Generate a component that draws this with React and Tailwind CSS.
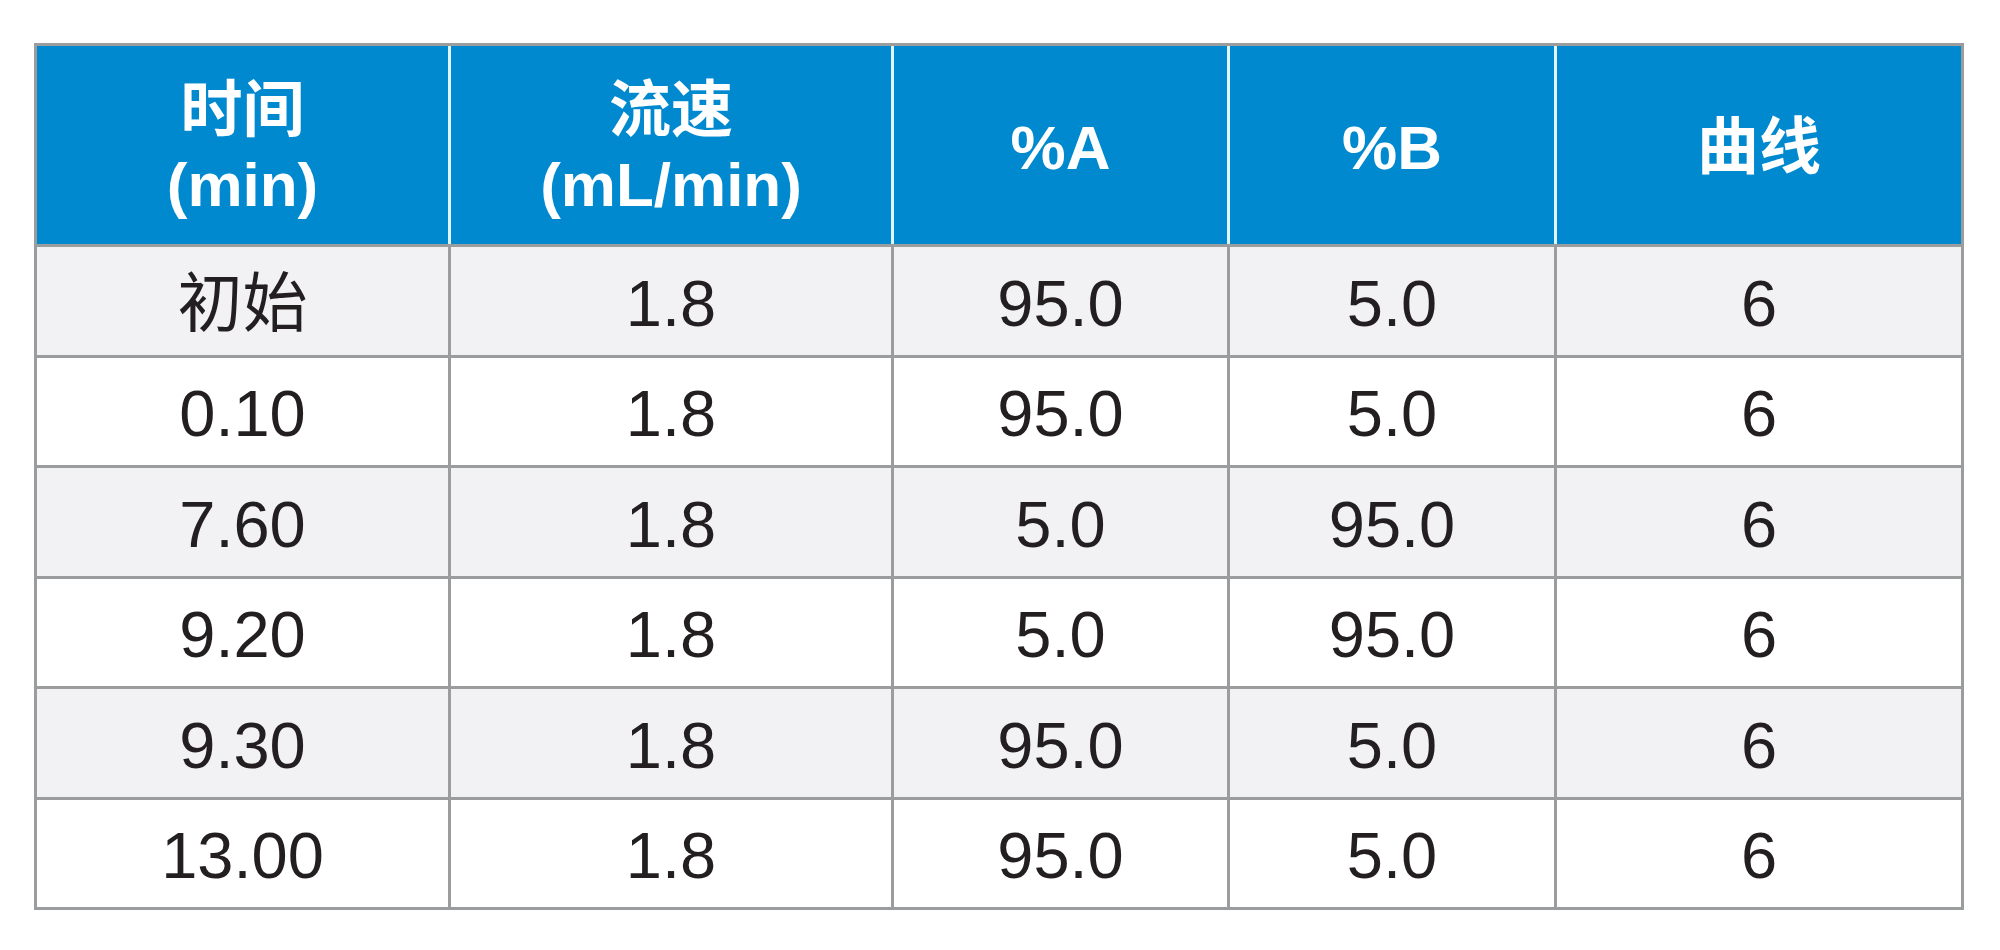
import React from "react";

const headers = [
  ["时间", "(min)"],
  ["流速", "(mL/min)"],
  ["%A"],
  ["%B"],
  ["曲线"],
];

const rows = [
  ["初始", "1.8", "95.0", "5.0", "6"],
  ["0.10", "1.8", "95.0", "5.0", "6"],
  ["7.60", "1.8", "5.0", "95.0", "6"],
  ["9.20", "1.8", "5.0", "95.0", "6"],
  ["9.30", "1.8", "95.0", "5.0", "6"],
  ["13.00", "1.8", "95.0", "5.0", "6"],
];

const font = {
  fontFamily: '"Liberation Sans", "Noto Sans CJK SC", Arial, sans-serif',
};

export default function App() {
  return (
    <div className="w-[2000px] h-[950px] bg-white pt-[43px] pl-[34px]" style={font}>
      <div className="w-[1930px] border-[3px] border-[#9b9c9e]">
        <div className="grid grid-cols-[411px_440px_333px_324px_404px] gap-x-[3px] bg-[#e3f5fc] h-[198px]">
          {headers.map((h, i) => (
            <div
              key={i}
              className="bg-[#0189d0] flex flex-col items-center justify-center text-white font-bold text-[62px] leading-[74px] pt-[6px]"
            >
              {h.map((line, j) => (
                <span key={j}>{line}</span>
              ))}
            </div>
          ))}
        </div>
        <div className="grid grid-cols-[411px_440px_333px_324px_404px] gap-[3px] bg-[#9b9c9e] border-t-[3px] border-[#9b9c9e]">
          {rows.map((r, ri) =>
            r.map((c, ci) => (
              <div
                key={ri + "-" + ci}
                className={
                  "h-[107.5px] flex items-center justify-center pt-[5px] text-[65px] text-[#231f20] " +
                  (ri % 2 === 0 ? "bg-[#f2f2f4]" : "bg-white")
                }
              >
                {c}
              </div>
            ))
          )}
        </div>
      </div>
    </div>
  );
}
